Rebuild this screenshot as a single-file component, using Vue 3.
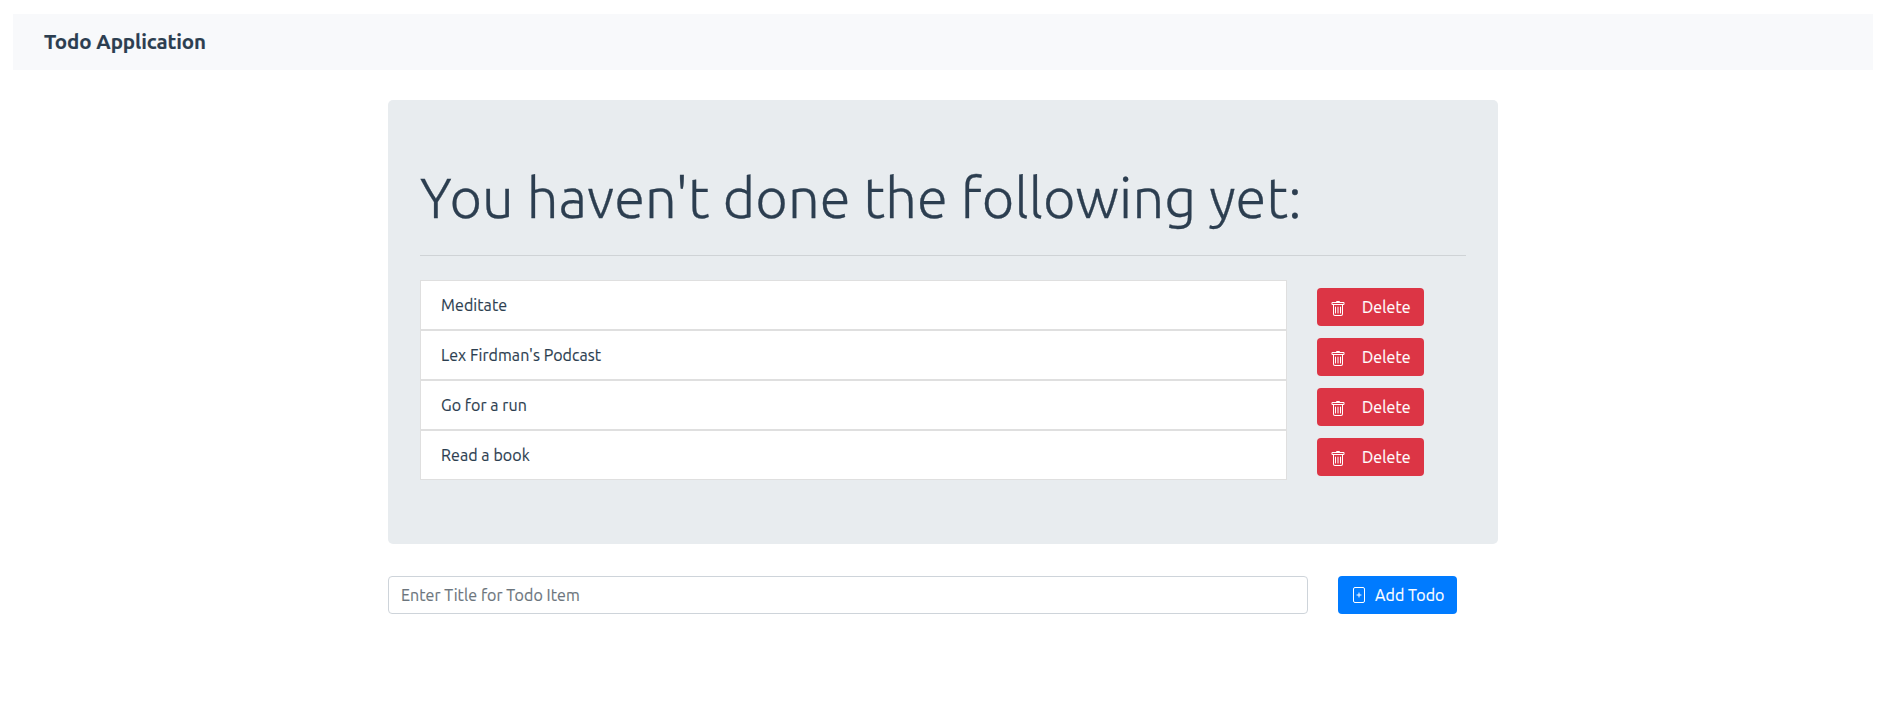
<script setup>
import { ref } from 'vue'

const todos = ref([
  { id: 1, title: 'Meditate' },
  { id: 2, title: "Lex Firdman's Podcast" },
  { id: 3, title: 'Go for a run' },
  { id: 4, title: 'Read a book' }
])
const title = ref('')
let nextId = 5

function addTodo() {
  const text = title.value.trim()
  if (!text) return
  todos.value.push({ id: nextId++, title: text })
  title.value = ''
}

function removeTodo(id) {
  todos.value = todos.value.filter((todo) => todo.id !== id)
}
</script>

<template>
  <div class="page">
    <nav class="navbar"><span class="brand">Todo Application</span></nav>
    <main class="container">
      <section class="panel">
        <h1 class="heading">You haven't done the following yet:</h1>
        <hr class="divider" />
        <div v-for="todo in todos" :key="todo.id" class="row">
          <div class="item">{{ todo.title }}</div>
          <button type="button" class="btn danger" @click="removeTodo(todo.id)">
            <svg class="icon trash" width="16" height="16" viewBox="0 0 16 16" fill="currentColor">
              <path d="M5.500 5.500a.5.5 0 0 1 .5.5v6a.5.5 0 0 1-1 0V6a.5.5 0 0 1 .5-.5zm2.500 0a.5.5 0 0 1 .5.5v6a.5.5 0 0 1-1 0V6a.5.5 0 0 1 .5-.5zm3 .5a.5.5 0 0 0-1 0v6a.5.5 0 0 0 1 0V6z" />
              <path fill-rule="evenodd" d="M14.500 3a1 1 0 0 1-1 1H13v9a2 2 0 0 1-2 2H5a2 2 0 0 1-2-2V4h-.5a1 1 0 0 1-1-1V2a1 1 0 0 1 1-1H6a1 1 0 0 1 1-1h2a1 1 0 0 1 1 1h3.500a1 1 0 0 1 1 1v1zM4.118 4L4 4.059V13a1 1 0 0 0 1 1h6a1 1 0 0 0 1-1V4.059L11.882 4H4.118zM2.500 3V2h11v1h-11z" />
            </svg>
            <span>Delete</span>
          </button>
        </div>
      </section>
      <form class="entry" @submit.prevent="addTodo">
        <input v-model="title" class="field" type="text" placeholder="Enter Title for Todo Item" />
        <button type="submit" class="btn primary">
          <svg class="icon" width="16" height="16" viewBox="0 0 16 16" fill="none" stroke="currentColor">
            <rect x="2.500" y=".5" width="11" height="15" rx="1.500" />
            <path d="M8 6v4M6 8h4" stroke-linecap="round" />
          </svg>
          <span>Add Todo</span>
        </button>
      </form>
    </main>
  </div>
</template>

<style>
body {
  background: #fff;
}
</style>

<style scoped>
.page,
.page * {
  box-sizing: border-box;
}
.page {
  padding: 14px 8px 0 13px;
  font-family: Ubuntu, "Noto Sans", "Open Sans", sans-serif;
  font-size: 16px;
  line-height: 24px;
  letter-spacing: 0.07px;
  color: #2c3e50;
  -webkit-text-stroke: 0.15px;
}
.navbar {
  display: flex;
  align-items: center;
  height: 56px;
  padding: 0 31px;
  background: #f8f9fb;
}
.brand {
  font-size: 20.5px;
  font-weight: 700;
  line-height: 30px;
  letter-spacing: -0.08px;
}
.container {
  width: 1110px;
  margin: 30px auto 0;
}
.panel {
  padding: 64px 32px;
  border-radius: 5px;
  background: #e8ecef;
}
.heading {
  margin: 0;
  font-size: 56px;
  font-weight: 300;
  line-height: 67px;
  letter-spacing: 0.15px;
  white-space: nowrap;
  -webkit-text-stroke: 0.3px;
}
.divider {
  height: 1px;
  margin: 24px 0;
  border: 0;
  background: #cfd3d6;
}
.row {
  display: flex;
  gap: 30px;
  height: 50px;
}
.item {
  width: 867px;
  padding: 12px 20px;
  border: 1px solid #dfdfdf;
  background: #fff;
}
.btn {
  display: flex;
  align-items: center;
  height: 38px;
  padding: 0 13px;
  border: 0;
  border-radius: 4px;
  color: #fff;
  font: inherit;
  letter-spacing: inherit;
  white-space: nowrap;
}
.danger {
  width: 107px;
  margin-top: 8px;
  gap: 16px;
  background: #dc3545;
}
.icon {
  flex: none;
}
.trash {
  position: relative;
  top: 2px;
}
.primary {
  width: 119px;
  gap: 8px;
  background: #007bff;
}
.entry {
  display: flex;
  gap: 30px;
  margin-top: 32px;
}
.field {
  width: 920px;
  height: 38px;
  padding: 6px 12px;
  border: 1px solid #ced4da;
  border-radius: 4px;
  background: #fff;
  color: #495057;
  font: inherit;
  letter-spacing: inherit;
}
.field::placeholder {
  color: #6c757d;
  opacity: 1;
}
</style>
